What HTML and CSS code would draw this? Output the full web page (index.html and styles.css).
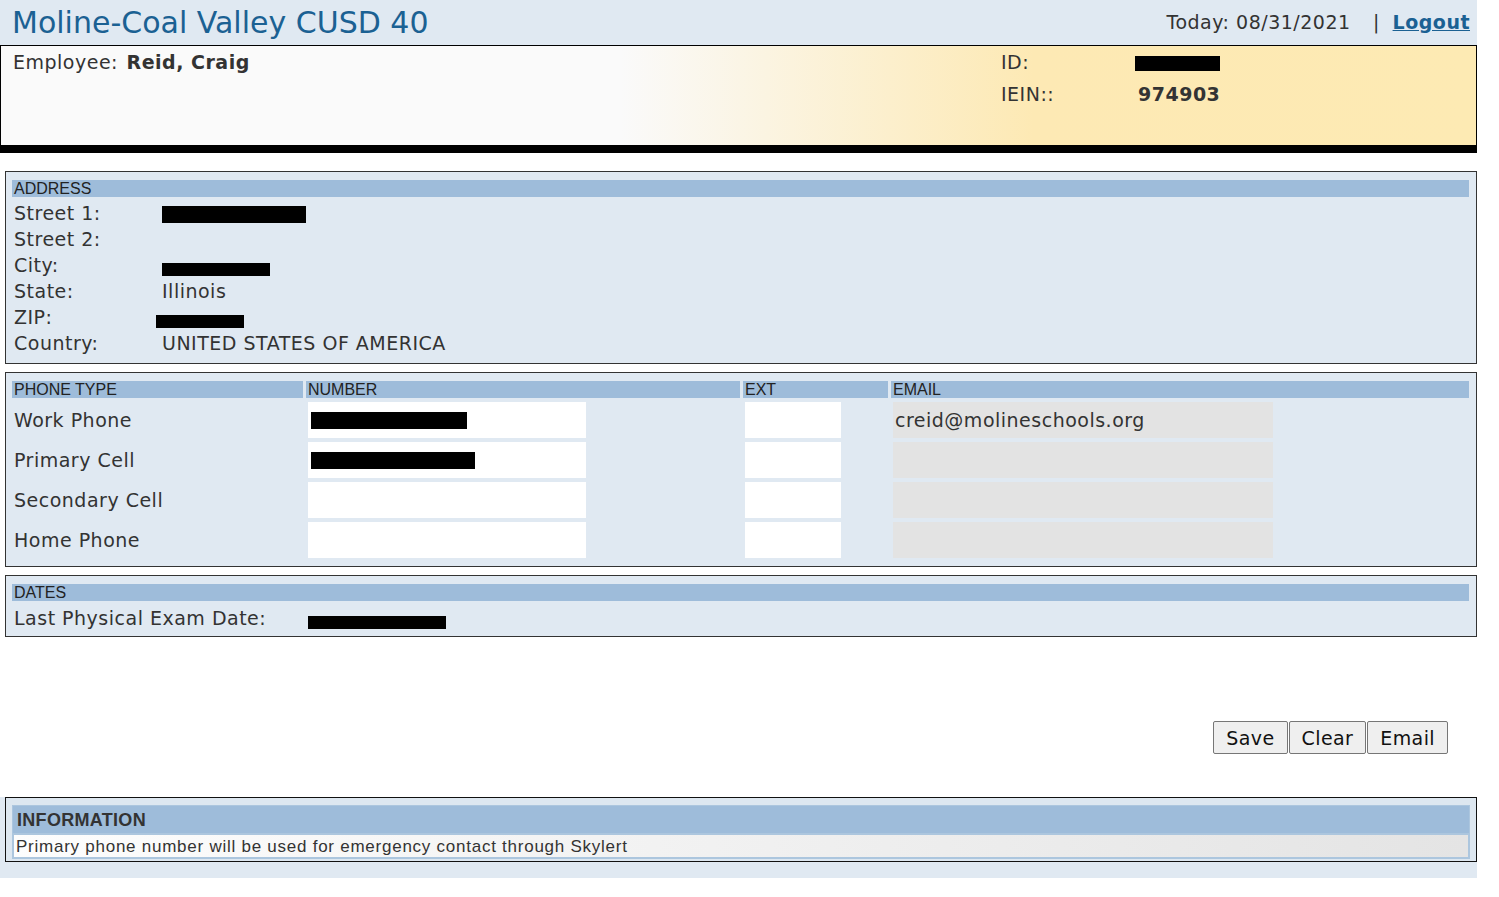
FILE: index.html
```html
<!DOCTYPE html>
<html lang="en">
<head>
    <meta charset="UTF-8">
    <title>Employee Information</title>
    <link rel="stylesheet" href="styles.css">
</head>
<body>
<div class="page">

    <!-- top bar -->
    <div class="topbar">
        <div class="district">Moline-Coal Valley CUSD 40</div>
        <div class="today">Today: 08/31/2021 <span class="sep">|</span> <a href="#" class="logout">Logout</a></div>
    </div>

    <!-- employee banner -->
    <div class="employee">
        <div class="emp-name"><span class="lbl">Employee:</span> <b>Reid, Craig</b></div>
        <div class="emp-ids">
            <span class="lbl">ID:</span><span><span class="redact id-redact"></span></span>
            <span class="lbl">IEIN::</span><b class="iein">974903</b>
        </div>
    </div>

    <!-- address -->
    <div class="section">
        <div class="sec-head">ADDRESS</div>
        <div class="addr">
            <span>Street 1:</span><span><span class="redact" style="width:144px"></span></span>
            <span>Street 2:</span><span></span>
            <span>City:</span><span><span class="redact low" style="width:108px"></span></span>
            <span>State:</span><span>Illinois</span>
            <span>ZIP:</span><span><span class="redact low shift" style="width:88px"></span></span>
            <span>Country:</span><span>UNITED STATES OF AMERICA</span>
        </div>
    </div>

    <!-- phones -->
    <div class="section phone-sec">
        <div class="phones">
            <div class="sec-head">PHONE TYPE</div>
            <div class="sec-head">NUMBER</div>
            <div class="sec-head">EXT</div>
            <div class="sec-head">EMAIL</div>

            <span class="ptype">Work Phone</span>
            <span><span class="field num"><span class="redact" style="width:156px"></span></span></span>
            <span><span class="field ext"></span></span>
            <span><span class="field mail">creid@molineschools.org</span></span>

            <span class="ptype">Primary Cell</span>
            <span><span class="field num"><span class="redact" style="width:164px"></span></span></span>
            <span><span class="field ext"></span></span>
            <span><span class="field mail"></span></span>

            <span class="ptype">Secondary Cell</span>
            <span><span class="field num"></span></span>
            <span><span class="field ext"></span></span>
            <span><span class="field mail"></span></span>

            <span class="ptype">Home Phone</span>
            <span><span class="field num"></span></span>
            <span><span class="field ext"></span></span>
            <span><span class="field mail"></span></span>
        </div>
    </div>

    <!-- dates -->
    <div class="section">
        <div class="sec-head">DATES</div>
        <div class="dates">
            <span>Last Physical Exam Date:</span><span><span class="redact low" style="width:138px"></span></span>
        </div>
    </div>

    <div class="buttons">
        <button>Save</button><button>Clear</button><button>Email</button>
    </div>

    <!-- information -->
    <div class="info-wrap">
        <div class="info">
            <div class="info-head">INFORMATION</div>
            <div class="info-body">Primary phone number will be used for emergency contact through Skylert</div>
        </div>
    </div>

</div>
</body>
</html>
```

FILE: styles.css
```css
body {
    margin: 0;
    background: #ffffff;
    color: #333333;
    font-family: "DejaVu Sans", Verdana, sans-serif;
    font-size: 19px;
    letter-spacing: 0.5px;
}

.page {
    width: 1477px;
}

/* Top bar */
.topbar {
    height: 45px;
    background: #e0e9f2;
    display: flex;
    justify-content: space-between;
    align-items: center;
    padding: 0 7px 0 12px;
    box-sizing: border-box;
}

.district {
    color: #1b6193;
    font-size: 30px;
    letter-spacing: 0;
}

.today {
    font-size: 19px;
    color: #333;
    margin-top: -1px;
}

.today .sep {
    margin: 0 6px 0 16px;
}

.logout {
    color: #1b6193;
    font-weight: bold;
}

/* Employee banner */
.employee {
    border: 1px solid #000;
    border-bottom: 8px solid #000;
    background: linear-gradient(to right, #fafafa 0%, #fafafa 42%, #fde9b4 70%, #fdeab3 100%);
    display: flex;
    padding: 5px 12px;
    height: 89px;
}

.emp-name {
    width: 988px;
}

.emp-name .lbl {
    margin-right: 2px;
}

.emp-ids {
    display: grid;
    grid-template-columns: 134px auto;
    row-gap: 10px;
    align-content: start;
    line-height: 22px;
}

.redact {
    display: inline-block;
    height: 17px;
    background: #000;
    vertical-align: middle;
}

.redact.low {
    height: 13px;
    margin-top: 6px;
}

.redact.shift {
    margin-left: -6px;
}

.id-redact {
    width: 85px;
    height: 15px;
}

.iein {
    margin-left: 3px;
}

/* Sections */
.section {
    margin: 8px 0 0 5px;
    border: 1px solid #333;
    background: #e0e9f2;
    padding: 8px 7px 7px 6px;
}

.employee + .section {
    margin-top: 18px;
}

.phone-sec {
    padding-bottom: 6px;
}

.sec-head {
    background: #9ebcda;
    font-family: "Liberation Sans", Tahoma, sans-serif;
    font-size: 16px;
    letter-spacing: 0;
    line-height: 18px;
    height: 17px;
    padding-left: 2px;
    color: #222;
}

.addr {
    display: grid;
    grid-template-columns: 148px auto;
    grid-auto-rows: 26px;
    align-items: center;
    padding: 3px 0 0 2px;
}

.phones {
    display: grid;
    grid-template-columns: 291px 434px 145px 1fr;
    column-gap: 3px;
    grid-auto-rows: auto;
}

.phones .sec-head {
    margin-bottom: 2px;
}

.ptype {
    padding-left: 2px;
    display: flex;
    align-items: center;
    height: 40px;
}

.field {
    display: flex;
    align-items: center;
    height: 36px;
    margin: 2px 0 2px 2px;
    background: #fff;
    box-sizing: border-box;
}

.field.num {
    width: 278px;
    padding-left: 3px;
}

.field.ext {
    width: 96px;
}

.field.mail {
    width: 380px;
    background: #e3e3e3;
    padding-left: 2px;
}

.dates {
    display: grid;
    grid-template-columns: 294px auto;
    height: 33px;
    align-items: center;
    padding-left: 2px;
    margin-bottom: -5px;
}

/* Buttons */
.buttons {
    display: flex;
    justify-content: flex-end;
    gap: 1px;
    margin: 84px 29px 0 0;
}

.buttons button {
    font-family: "DejaVu Sans", Verdana, sans-serif;
    font-size: 19px;
    letter-spacing: 0.4px;
    color: #111;
    background: #efefef;
    border: 1px solid #767676;
    border-radius: 2px;
    height: 33px;
    padding: 0 12px;
}

/* Information */
.info-wrap {
    margin-top: 43px;
    background: #e0e9f2;
    padding: 0 0 16px 5px;
}

.info {
    border: 1px solid #111;
    background: #dde7f0;
    padding: 7px 6px 2px 6px;
    height: 54px;
}

.info-head {
    background: #9ebcda;
    height: 27px;
    line-height: 28px;
    font-family: "Liberation Sans", Tahoma, sans-serif;
    font-weight: bold;
    font-size: 18px;
    letter-spacing: 0.3px;
    padding-left: 4px;
    color: #333;
    border: 1px solid #acc6de;
    border-bottom: none;
}

.info-body {
    height: 22px;
    line-height: 23px;
    background: linear-gradient(to right, #fdfdfd, #e4e4e4);
    border: 2px solid #acc6de;
    font-family: "Liberation Sans", Tahoma, sans-serif;
    font-size: 17px;
    letter-spacing: 0.75px;
    padding-left: 2px;
    color: #333;
}
```
